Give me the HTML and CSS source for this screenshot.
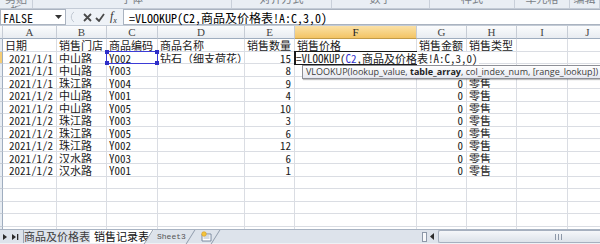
FILE: index.html
```html
<!DOCTYPE html>
<html>

<head>
    <title>销售记录表</title>
    <meta charset="utf-8">
    <link rel="stylesheet" href="styles.css">
</head>

<body>

    <div class="ribbon">
        <div class="group" style="width:33px">剪贴板</div>
        <div class="group" style="width:199px">字体</div>
        <div class="group" style="width:100px">对齐方式</div>
        <div class="group" style="width:98px">数字</div>
        <div class="group" style="width:85px">样式</div>
        <div class="group" style="width:55px">单元格</div>
        <div class="group" style="width:30px">编辑</div>
    </div>

    <div class="fbar">
        <div class="namebox">
            <span>FALSE</span>
            <svg width="7" height="4" viewBox="0 0 7 4"><path d="M0 0h7L3.5 4z" fill="#333"/></svg>
        </div>
        <div class="fbtns">
            <svg class="dot" width="8" height="12" viewBox="0 0 8 12"><path d="M7 1A6 6 0 0 0 7 11" fill="none" stroke="#c2c9d3"/></svg>
            <svg width="9" height="9" viewBox="0 0 9 9"><path d="M1 1l7 7M8 1L1 8" stroke="#4a4a4a" stroke-width="1.8"/></svg>
            <svg width="10" height="9" viewBox="0 0 10 9"><path d="M1 5l3 3 5-7" fill="none" stroke="#4a4a4a" stroke-width="1.8"/></svg>
            <span class="fx">f<sub>x</sub></span>
        </div>
        <div class="finput">=VLOOKUP(C2,商品及价格表!A:C,3,0)</div>
    </div>

    <div class="sheet">
        <!-- header -->
        <div class="h"></div>
        <div class="h">A</div>
        <div class="h">B</div>
        <div class="h">C</div>
        <div class="h">D</div>
        <div class="h">E</div>
        <div class="h on">F</div>
        <div class="h">G</div>
        <div class="h">H</div>
        <div class="h">I</div>
        <div class="h">J</div>

        <!-- 1 -->
        <div class="r"></div>
        <div class="c">日期</div>
        <div class="c">销售门店</div>
        <div class="c">商品编码</div>
        <div class="c">商品名称</div>
        <div class="c">销售数量</div>
        <div class="c">销售价格</div>
        <div class="c">销售金额</div>
        <div class="c">销售类型</div>
        <div class="c"></div>
        <div class="c"></div>

        <!-- 2 -->
        <div class="r on"></div>
        <div class="c n">2021/1/1</div>
        <div class="c">中山路</div>
        <div class="c c2">Y002
            <div class="ref">
                <span class="hdl tl"></span><span class="hdl tr"></span>
                <span class="hdl bl"></span><span class="hdl br"></span>
            </div>
        </div>
        <div class="c">钻石（细支荷花）</div>
        <div class="c n">15</div>
        <div class="c f2">
            <div class="edit"></div>
            <div class="etext">=VLOOKUP(<span class="blue">C2</span>,商品及价格表!A:C,3,0)</div>
            <div class="tip">VLOOKUP(lookup_value, <b>table_array</b>, col_index_num, [range_lookup])</div>
        </div>
        <div class="c"></div>
        <div class="c"></div>
        <div class="c"></div>
        <div class="c"></div>

        <!-- 3 -->
        <div class="r"></div>
        <div class="c n">2021/1/1</div>
        <div class="c">中山路</div>
        <div class="c">Y003</div>
        <div class="c"></div>
        <div class="c n">8</div>
        <div class="c"></div>
        <div class="c"></div>
        <div class="c"></div>
        <div class="c"></div>
        <div class="c"></div>

        <!-- 4 -->
        <div class="r"></div>
        <div class="c n">2021/1/1</div>
        <div class="c">珠江路</div>
        <div class="c">Y004</div>
        <div class="c"></div>
        <div class="c n">9</div>
        <div class="c"></div>
        <div class="c n">0</div>
        <div class="c">零售</div>
        <div class="c"></div>
        <div class="c"></div>

        <!-- 5 -->
        <div class="r"></div>
        <div class="c n">2021/1/2</div>
        <div class="c">中山路</div>
        <div class="c">Y001</div>
        <div class="c"></div>
        <div class="c n">4</div>
        <div class="c"></div>
        <div class="c n">0</div>
        <div class="c">零售</div>
        <div class="c"></div>
        <div class="c"></div>

        <!-- 6 -->
        <div class="r"></div>
        <div class="c n">2021/1/2</div>
        <div class="c">中山路</div>
        <div class="c">Y005</div>
        <div class="c"></div>
        <div class="c n">10</div>
        <div class="c"></div>
        <div class="c n">0</div>
        <div class="c">零售</div>
        <div class="c"></div>
        <div class="c"></div>

        <!-- 7 -->
        <div class="r"></div>
        <div class="c n">2021/1/2</div>
        <div class="c">珠江路</div>
        <div class="c">Y003</div>
        <div class="c"></div>
        <div class="c n">3</div>
        <div class="c"></div>
        <div class="c n">0</div>
        <div class="c">零售</div>
        <div class="c"></div>
        <div class="c"></div>

        <!-- 8 -->
        <div class="r"></div>
        <div class="c n">2021/1/2</div>
        <div class="c">珠江路</div>
        <div class="c">Y005</div>
        <div class="c"></div>
        <div class="c n">6</div>
        <div class="c"></div>
        <div class="c n">0</div>
        <div class="c">零售</div>
        <div class="c"></div>
        <div class="c"></div>

        <!-- 9 -->
        <div class="r"></div>
        <div class="c n">2021/1/2</div>
        <div class="c">珠江路</div>
        <div class="c">Y002</div>
        <div class="c"></div>
        <div class="c n">12</div>
        <div class="c"></div>
        <div class="c n">0</div>
        <div class="c">零售</div>
        <div class="c"></div>
        <div class="c"></div>

        <!-- 10 -->
        <div class="r"></div>
        <div class="c n">2021/1/2</div>
        <div class="c">汉水路</div>
        <div class="c">Y003</div>
        <div class="c"></div>
        <div class="c n">6</div>
        <div class="c"></div>
        <div class="c n">0</div>
        <div class="c">零售</div>
        <div class="c"></div>
        <div class="c"></div>

        <!-- 11 -->
        <div class="r"></div>
        <div class="c n">2021/1/2</div>
        <div class="c">汉水路</div>
        <div class="c">Y001</div>
        <div class="c"></div>
        <div class="c n">1</div>
        <div class="c"></div>
        <div class="c n">0</div>
        <div class="c">零售</div>
        <div class="c"></div>
        <div class="c"></div>

        <!-- 12 -->
        <div class="r"></div><div class="c"></div><div class="c"></div><div class="c"></div><div class="c"></div><div class="c"></div><div class="c"></div><div class="c"></div><div class="c"></div><div class="c"></div><div class="c"></div>
        <!-- 13 -->
        <div class="r"></div><div class="c"></div><div class="c"></div><div class="c"></div><div class="c"></div><div class="c"></div><div class="c"></div><div class="c"></div><div class="c"></div><div class="c"></div><div class="c"></div>
        <!-- 14 -->
        <div class="r"></div><div class="c"></div><div class="c"></div><div class="c"></div><div class="c"></div><div class="c"></div><div class="c"></div><div class="c"></div><div class="c"></div><div class="c"></div><div class="c"></div>
        <!-- 15 -->
        <div class="r"></div><div class="c"></div><div class="c"></div><div class="c"></div><div class="c"></div><div class="c"></div><div class="c"></div><div class="c"></div><div class="c"></div><div class="c"></div><div class="c"></div>
        <!-- 16 -->
        <div class="r"></div><div class="c"></div><div class="c"></div><div class="c"></div><div class="c"></div><div class="c"></div><div class="c"></div><div class="c"></div><div class="c"></div><div class="c"></div><div class="c"></div>
    </div>

    <div class="bottom">
        <div class="tabs">
            <div class="nav">
                <svg width="20" height="8" viewBox="0 0 20 8">
                    <path d="M3 1l4 3-4 3z" fill="#2b2b2b"/>
                    <path d="M12 1l4 3-4 3z M17 1h1.3v6H17z" fill="#2b2b2b"/>
                </svg>
            </div>
            <div class="tab">商品及价格表</div>
            <div class="tab active">销售记录表</div>
            <div class="tab sheet3">Sheet3</div>
            <div class="tab ins">
                <svg width="14" height="11" viewBox="0 0 14 11">
                    <path d="M2 3h9v7H2z" fill="#fff" stroke="#7a8aa0"/>
                    <path d="M3.5 5h6M3.5 7h6" stroke="#a9b6c8"/>
                    <circle cx="4" cy="3" r="2.3" fill="#f4c43c" stroke="#d79a1e" stroke-width=".6"/>
                </svg>
            </div>
        </div>
        <div class="hscroll">
            <div class="split"></div>
            <div class="larrow">
                <svg width="5" height="7" viewBox="0 0 5 7"><path d="M4 0v7L0 3.5z" fill="#2b2b2b"/></svg>
            </div>
            <div class="thumb"><span class="grip"></span></div>
        </div>
    </div>

</body>

</html>
```

FILE: styles.css
```css
* {
    box-sizing: border-box;
}

body {
    margin: 0;
    width: 600px;
    height: 244px;
    overflow: hidden;
    background-color: #fff;
    font-family: "Noto Sans CJK SC", sans-serif;
}

/* ribbon group labels, cut off at the top */
.ribbon {
    display: flex;
    height: 9px;
    background: #e9eef4;
    border-bottom: 1px solid #c3cbd6;
    overflow: hidden;
}

.group {
    flex: none;
    height: 16px;
    margin-top: -8px;
    border-right: 1px solid #c9d0da;
    text-align: center;
    font-size: 11px;
    line-height: 12px;
    color: #7a7f86;
}

/* formula bar */
.fbar {
    display: flex;
    height: 17px;
    background: #eef2f7;
    border-bottom: 1px solid #c3cbd6;
}

.namebox {
    width: 66px;
    background: #fff;
    border: 1px solid #aab3c0;
    display: flex;
    align-items: center;
    justify-content: space-between;
    padding: 0 3px 0 2px;
    font-family: "Noto Sans Mono CJK SC", "Liberation Mono", monospace;
    font-size: 12px;
    color: #111;
}

.fbtns {
    width: 57px;
    display: flex;
    align-items: center;
    gap: 3px;
    padding-left: 1px;
}

.fbtns .dot {
    margin-right: 5px;
}

.fx {
    font-family: "Liberation Serif", serif;
    font-style: italic;
    font-size: 12px;
    color: #333;
    margin-left: 2px;
}

.fx sub {
    font-size: 8px;
}

.finput {
    flex: 1;
    background: #fff;
    border: 1px solid #aab3c0;
    border-right: none;
    padding-left: 5px;
    font-family: "Noto Sans Mono CJK SC", "Noto Sans CJK SC", monospace;
    font-size: 12px;
    line-height: 15px;
    white-space: nowrap;
}

/* grid */
.sheet {
    display: grid;
    grid-template-columns: 3px 54px 50px 51px 87px 50px 122px 50px 50px 51px 40px;
    grid-template-rows: 13px;
    grid-auto-rows: 12.5px;
    height: 203px;
    overflow: hidden;
    font-family: "Noto Sans Mono CJK SC", "Noto Sans CJK SC", monospace;
    font-size: 11px;
    line-height: 12px;
}

.h {
    background: linear-gradient(#fbfcfd, #e8ecf1);
    border-right: 1px solid #c6ccd5;
    border-bottom: 1px solid #9fadbf;
    text-align: center;
    font-family: "Liberation Serif", serif;
    font-size: 11px;
    color: #444;
}

.h.on {
    background: linear-gradient(#fbe1a6, #f3c464);
    border-bottom-color: #c29b48;
    color: #222;
}

.r {
    background: #e7ecf2;
    border-right: 1px solid #9fadbf;
    border-bottom: 1px solid #c6ccd5;
}

.r.on {
    background: #f5cd76;
}

.c {
    border-right: 1px solid #dadde3;
    border-bottom: 1px solid #dadde3;
    padding: 0 2px;
    white-space: nowrap;
    overflow: hidden;
    color: #1a1a1a;
}

.n {
    text-align: right;
    padding-right: 3px;
}

/* range reference C2 */
.c2 {
    position: relative;
    overflow: visible;
}

.ref {
    position: absolute;
    left: -1px;
    top: -1px;
    width: 52px;
    height: 13.5px;
    border: 1px solid #3b3bd6;
}

.hdl {
    position: absolute;
    width: 4px;
    height: 4px;
    background: #2e2ec8;
}

.tl { left: -2px; top: -2px; }
.tr { right: -2px; top: -2px; }
.bl { left: -2px; bottom: -2px; }
.br { right: -2px; bottom: -2px; }

/* cell in edit mode */
.f2 {
    position: relative;
    overflow: visible;
    z-index: 2;
}

.edit {
    position: absolute;
    left: -1px;
    top: -1px;
    width: 123px;
    height: 14px;
    border: 2px solid #1a1a1a;
}

.etext {
    position: absolute;
    left: 1px;
    top: 0;
    padding-right: 1px;
    background: #fff;
    white-space: nowrap;
}

.blue {
    color: #3333cc;
}

.tip {
    position: absolute;
    left: 7px;
    top: 13px;
    height: 14px;
    padding: 0 3px;
    border: 1px solid #8d8f96;
    background: linear-gradient(#ffffff, #e6e8f0);
    box-shadow: 1px 1px 1px rgba(0, 0, 0, 0.25);
    font-family: "Open Sans", sans-serif;
    font-size: 9px;
    line-height: 12px;
    color: #3c3c3c;
    white-space: nowrap;
}

.tip b {
    color: #222;
}

/* sheet tabs + scrollbar */
.bottom {
    display: flex;
    height: 15px;
    background: #dde3eb;
    border-top: 1px solid #a9b4c3;
    border-bottom: 1px solid #eef1f5;
}

.tabs {
    width: 420px;
    display: flex;
}

.nav {
    width: 24px;
    border-right: 1px solid #9aa6b6;
    display: flex;
    align-items: center;
}

.tab {
    position: relative;
    display: flex;
    align-items: center;
    font-size: 11px;
    line-height: 13px;
    color: #3d3d3d;
}

.tab:first-of-type {
    width: 71px;
    padding-left: 5px;
    background: #e6eaf0;
    border-right: 1px solid #9aa6b6;
}

.tab.active {
    width: 64px;
    padding-left: 4px;
    background: #fff;
    color: #111;
    clip-path: polygon(0 0, 100% 0, calc(100% - 9px) 100%, 0 100%);
}

.tab.sheet3 {
    width: 38px;
    padding-left: 3px;
    font-family: "Liberation Mono", monospace;
    font-size: 8px;
    color: #555;
}

.tab.sheet3::before,
.tab.ins::after {
    content: "";
    position: absolute;
    top: 0;
    width: 1px;
    height: 14px;
    background: #8f9bab;
    transform: skewX(-32deg);
}

.tab.sheet3::before {
    left: -6px;
}

.tab.ins::after {
    right: 4px;
}

.tab.ins {
    width: 28px;
    padding-left: 8px;
}

.tab.ins::before {
    content: "";
    position: absolute;
    top: 0;
    left: -2px;
    width: 1px;
    height: 14px;
    background: #8f9bab;
    transform: skewX(-32deg);
}

.hscroll {
    flex: 1;
    display: flex;
    align-items: center;
    padding-left: 2px;
}

.split {
    width: 5px;
    height: 10px;
    border: 1px solid #8d98a8;
    background: #f7f8fa;
}

.larrow {
    width: 11px;
    display: flex;
    justify-content: center;
}

.thumb {
    flex: 1;
    height: 13px;
    border: 1px solid #a6b0bf;
    border-right: none;
    border-radius: 2px 0 0 2px;
    background: linear-gradient(#f5f7fa, #dde3ea);
    position: relative;
}

.grip {
    position: absolute;
    left: 116px;
    top: 3px;
    width: 7px;
    height: 6px;
    border-left: 1px solid #8d98a8;
    border-right: 1px solid #8d98a8;
}

.grip::after {
    content: "";
    position: absolute;
    left: 2px;
    top: 0;
    width: 1px;
    height: 6px;
    background: #8d98a8;
}
```
